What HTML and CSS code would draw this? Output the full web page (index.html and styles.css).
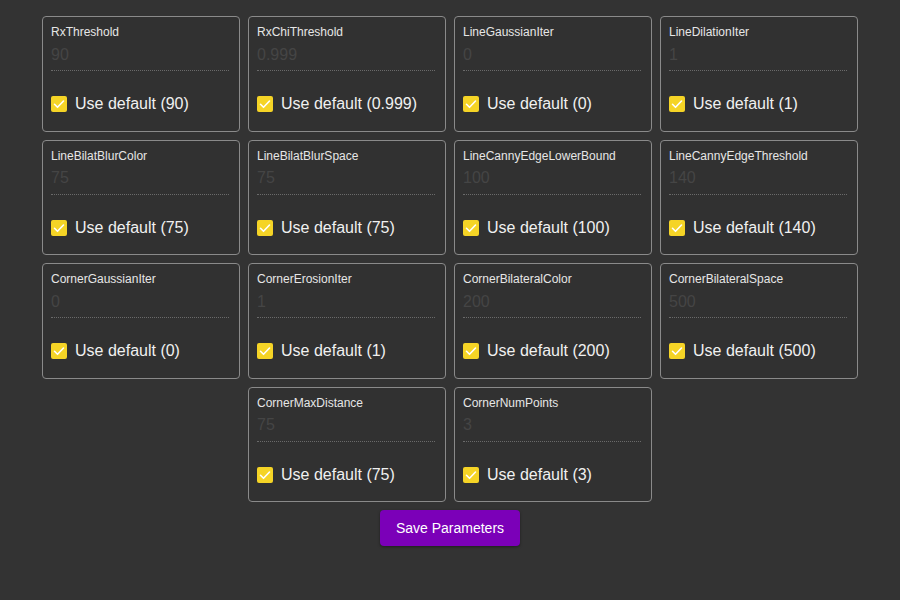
FILE: index.html
```html
<!DOCTYPE html>
<html>
<head>
<meta charset="utf-8">
<link rel="stylesheet" href="styles.css">
</head>
<body>
<div class="page">
  <div class="grid">
    <div class="card"><label class="name">RxThreshold</label><input class="val" value="90" disabled><label class="chk"><span class="box"><svg viewBox="0 0 16 16"><path d="M3.5 8.3l3 3 6-6.3"/></svg></span>Use default (90)</label></div>
    <div class="card"><label class="name">RxChiThreshold</label><input class="val" value="0.999" disabled><label class="chk"><span class="box"><svg viewBox="0 0 16 16"><path d="M3.5 8.3l3 3 6-6.3"/></svg></span>Use default (0.999)</label></div>
    <div class="card"><label class="name">LineGaussianIter</label><input class="val" value="0" disabled><label class="chk"><span class="box"><svg viewBox="0 0 16 16"><path d="M3.5 8.3l3 3 6-6.3"/></svg></span>Use default (0)</label></div>
    <div class="card"><label class="name">LineDilationIter</label><input class="val" value="1" disabled><label class="chk"><span class="box"><svg viewBox="0 0 16 16"><path d="M3.5 8.3l3 3 6-6.3"/></svg></span>Use default (1)</label></div>
    <div class="card"><label class="name">LineBilatBlurColor</label><input class="val" value="75" disabled><label class="chk"><span class="box"><svg viewBox="0 0 16 16"><path d="M3.5 8.3l3 3 6-6.3"/></svg></span>Use default (75)</label></div>
    <div class="card"><label class="name">LineBilatBlurSpace</label><input class="val" value="75" disabled><label class="chk"><span class="box"><svg viewBox="0 0 16 16"><path d="M3.5 8.3l3 3 6-6.3"/></svg></span>Use default (75)</label></div>
    <div class="card"><label class="name">LineCannyEdgeLowerBound</label><input class="val" value="100" disabled><label class="chk"><span class="box"><svg viewBox="0 0 16 16"><path d="M3.5 8.3l3 3 6-6.3"/></svg></span>Use default (100)</label></div>
    <div class="card"><label class="name">LineCannyEdgeThreshold</label><input class="val" value="140" disabled><label class="chk"><span class="box"><svg viewBox="0 0 16 16"><path d="M3.5 8.3l3 3 6-6.3"/></svg></span>Use default (140)</label></div>
    <div class="card"><label class="name">CornerGaussianIter</label><input class="val" value="0" disabled><label class="chk"><span class="box"><svg viewBox="0 0 16 16"><path d="M3.5 8.3l3 3 6-6.3"/></svg></span>Use default (0)</label></div>
    <div class="card"><label class="name">CornerErosionIter</label><input class="val" value="1" disabled><label class="chk"><span class="box"><svg viewBox="0 0 16 16"><path d="M3.5 8.3l3 3 6-6.3"/></svg></span>Use default (1)</label></div>
    <div class="card"><label class="name">CornerBilateralColor</label><input class="val" value="200" disabled><label class="chk"><span class="box"><svg viewBox="0 0 16 16"><path d="M3.5 8.3l3 3 6-6.3"/></svg></span>Use default (200)</label></div>
    <div class="card"><label class="name">CornerBilateralSpace</label><input class="val" value="500" disabled><label class="chk"><span class="box"><svg viewBox="0 0 16 16"><path d="M3.5 8.3l3 3 6-6.3"/></svg></span>Use default (500)</label></div>
    <div class="card"><label class="name">CornerMaxDistance</label><input class="val" value="75" disabled><label class="chk"><span class="box"><svg viewBox="0 0 16 16"><path d="M3.5 8.3l3 3 6-6.3"/></svg></span>Use default (75)</label></div>
    <div class="card"><label class="name">CornerNumPoints</label><input class="val" value="3" disabled><label class="chk"><span class="box"><svg viewBox="0 0 16 16"><path d="M3.5 8.3l3 3 6-6.3"/></svg></span>Use default (3)</label></div>
  </div>
  <button class="save">Save Parameters</button>
</div>
</body>
</html>
```

FILE: styles.css
```css
html, body {
  margin: 0;
  padding: 0;
  background: #333333;
  height: 100%;
}
body {
  font-family: "Liberation Sans", Arial, sans-serif;
  color: #ececec;
}
.page {
  display: flex;
  flex-direction: column;
  align-items: center;
  padding-top: 16px;
}
.grid {
  width: 816px;
  display: flex;
  flex-wrap: wrap;
  justify-content: center;
  gap: 8px;
}
.card {
  box-sizing: border-box;
  width: 198px;
  height: 115.5px;
  border: 1px solid #8a8a8a;
  border-radius: 4px;
  background: #313131;
  padding: 8px 10px 0 8px;
  display: flex;
  flex-direction: column;
}
.name {
  font-size: 12px;
  line-height: 14px;
  color: #e6e6e6;
}
.val {
  font-family: "Liberation Sans", Arial, sans-serif;
  font-size: 16px;
  color: #454545;
  background: transparent;
  border: none;
  border-bottom: 1px dotted #6a6a6a;
  padding: 0 0 1px 0;
  margin: 1px 0 0 0;
  height: 29px;
  width: 100%;
  outline: none;
}
.chk {
  display: flex;
  align-items: center;
  gap: 8px;
  font-size: 16px;
  color: #f0f0f0;
  margin-top: 24px;
  line-height: 18px;
}
.box {
  width: 16px;
  height: 16px;
  border-radius: 2px;
  background: #f5d426;
  display: flex;
}
.box svg {
  width: 16px;
  height: 16px;
  fill: none;
  stroke: #ffffff;
  stroke-width: 1.6;
  stroke-linecap: round;
  stroke-linejoin: round;
}
.save {
  margin-top: 8px;
  width: 140px;
  height: 36px;
  background: #7b00b8;
  color: #ffffff;
  border: none;
  border-radius: 4px;
  font-family: "Liberation Sans", Arial, sans-serif;
  font-size: 14px;
  box-shadow: 0 1px 3px rgba(0,0,0,0.4);
}
```
